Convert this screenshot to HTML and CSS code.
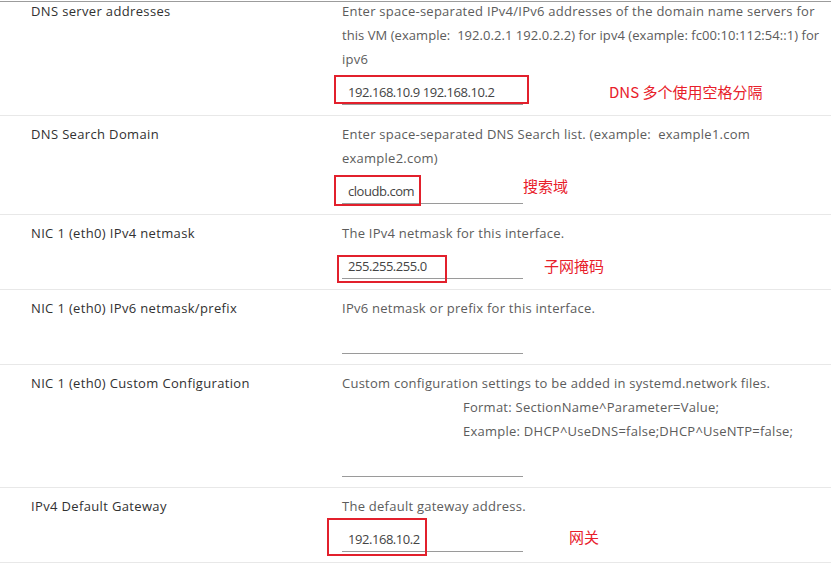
FILE: index.html
```html
<!DOCTYPE html>
<html lang="en">
<head>
<meta charset="utf-8">
<title>Customize template</title>
<link rel="stylesheet" href="styles.css">
</head>
<body>
<div class="table">
  <div class="row first">
    <div class="label">DNS server addresses</div>
    <div class="field">
      <div class="desc">Enter space-separated IPv4/IPv6 addresses of the domain name servers for<br><span class="tight">this VM (example:&nbsp; 192.0.2.1 192.0.2.2) for ipv4 (example: fc00:10:112:54::1) for</span><br>ipv6</div>
      <div class="input-wrap">
        <div class="input">192.168.10.9 192.168.10.2</div>
        <span class="mark mark-dns"></span>
        <span class="note note-dns">DNS 多个使用空格分隔</span>
      </div>
    </div>
  </div>
  <div class="row">
    <div class="label">DNS Search Domain</div>
    <div class="field">
      <div class="desc">Enter space-separated DNS Search list. (example:&nbsp; example1.com<br>example2.com)</div>
      <div class="input-wrap">
        <div class="input">cloudb.com</div>
        <span class="mark mark-search"></span>
        <span class="note note-search">搜索域</span>
      </div>
    </div>
  </div>
  <div class="row">
    <div class="label">NIC 1 (eth0) IPv4 netmask</div>
    <div class="field">
      <div class="desc">The IPv4 netmask for this interface.</div>
      <div class="input-wrap">
        <div class="input">255.255.255.0</div>
        <span class="mark mark-mask"></span>
        <span class="note note-mask">子网掩码</span>
      </div>
    </div>
  </div>
  <div class="row">
    <div class="label">NIC 1 (eth0) IPv6 netmask/prefix</div>
    <div class="field">
      <div class="desc">IPv6 netmask or prefix for this interface.</div>
      <div class="input-wrap">
        <div class="input"></div>
      </div>
    </div>
  </div>
  <div class="row">
    <div class="label">NIC 1 (eth0) Custom Configuration</div>
    <div class="field">
      <div class="desc">Custom configuration settings to be added in systemd.network files.<br><span class="indent">Format: SectionName^Parameter=Value;</span><br><span class="indent">Example: DHCP^UseDNS=false;DHCP^UseNTP=false;</span></div>
      <div class="input-wrap">
        <div class="input"></div>
      </div>
    </div>
  </div>
  <div class="row">
    <div class="label">IPv4 Default Gateway</div>
    <div class="field">
      <div class="desc">The default gateway address.</div>
      <div class="input-wrap">
        <div class="input">192.168.10.2</div>
        <span class="mark mark-gw"></span>
        <span class="note note-gw">网关</span>
      </div>
    </div>
  </div>
</div>
</body>
</html>
```
FILE: styles.css
```css
html, body {
  margin: 0;
  padding: 0;
  background: #ffffff;
}
body {
  font-family: "Open Sans", "Liberation Sans", sans-serif;
  font-size: 13px;
  color: #565656;
  width: 831px;
  height: 565px;
  overflow: hidden;
}
.table {
  margin-top: 1px;
  border-top: 1px solid #9c9c9c;
}
.row {
  display: grid;
  grid-template-columns: 311px 1fr;
  padding: 6px 0 10px 31px;
  border-bottom: 1px solid #e8e8e8;
}
.row.first {
  padding-top: 0;
}
.row.first .label,
.row.first .field {
  margin-top: -3px;
}
.label {
  line-height: 24px;
  color: #313131;
  white-space: nowrap;
  letter-spacing: 0.35px;
}
.desc {
  line-height: 24px;
  white-space: nowrap;
  color: #5c5c5c;
  letter-spacing: 0.25px;
}
.tight {
  letter-spacing: 0.05px;
}
.indent {
  padding-left: 121px;
}
.input-wrap {
  position: relative;
  margin-top: 10px;
  width: 181px;
}
.input {
  height: 23px;
  line-height: 23px;
  padding-left: 6px;
  border-bottom: 1px solid #9a9a9a;
  color: #444444;
  white-space: nowrap;
  letter-spacing: -0.45px;
}
.mark {
  position: absolute;
  border: 2px solid #e2202c;
  box-sizing: border-box;
}
.mark-dns { left: -8px; top: -6px; width: 195px; height: 29px; }
.mark-search { left: -8px; top: -5px; width: 87px; height: 31px; }
.mark-mask { left: -5px; top: 0px; width: 110px; height: 28px; }
.mark-gw { left: -15px; top: -10px; width: 100px; height: 38px; }
.note {
  position: absolute;
  font-family: "Noto Sans CJK SC", "Open Sans", sans-serif;
  font-size: 15px;
  line-height: 20px;
  color: #e8202a;
  white-space: nowrap;
}
.note-dns { left: 267px; top: 1px; }
.note-search { left: 181px; top: -4px; }
.note-mask { left: 202px; top: 1px; }
.note-gw { left: 227px; top: -1px; }
```
